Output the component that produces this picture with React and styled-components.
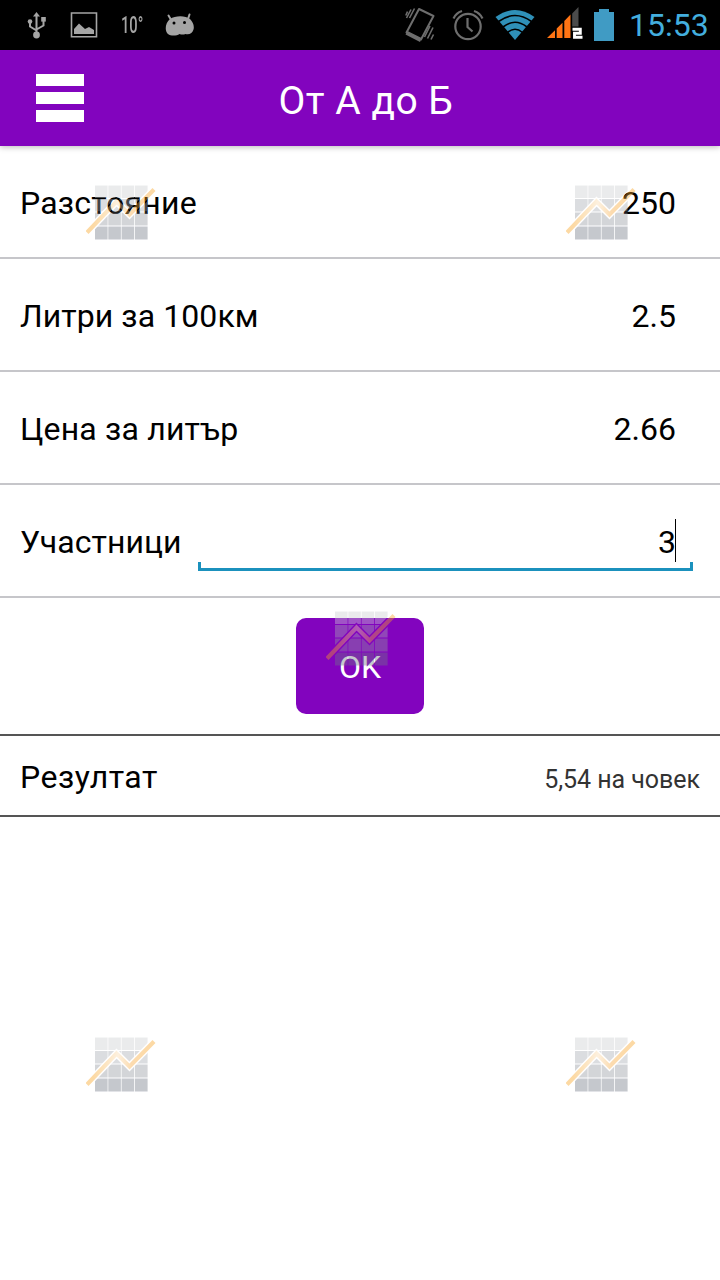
import React, { useState } from 'react';
import styled, { createGlobalStyle } from 'styled-components';

const palette = {
  purple: '#8204be',
  holo: '#43aede',
  holoDark: '#1b91bd',
  line: '#c6c6ca',
  dark: '#555555',
  statusLight: '#a5a5a5',
  statusDim: '#6e6e6e',
};

const GlobalStyle = createGlobalStyle`
  body {
    margin: 0;
    background: #fff;
    font-family: Roboto, 'Noto Sans', sans-serif;
  }
  * {
    box-sizing: border-box;
  }
`;

const Screen = styled.div`
  position: relative;
  width: 720px;
  height: 1280px;
  overflow: hidden;
  background: #fff;
`;

const StatusBar = styled.div`
  display: flex;
  justify-content: space-between;
  height: 50px;
  padding: 0 12px 0 24px;
  background: #000;
`;

const StatusGroup = styled.div`
  display: flex;
  align-items: center;
`;

const StatusIcon = styled.svg`
  display: block;
  flex: none;
`;

const Spacer = styled.span`
  flex: none;
  width: ${({ $w }) => $w}px;
`;

const Temperature = styled.span`
  width: 20px;
  margin: 0 24px 0 23px;
  color: ${palette.statusLight};
  font-size: 24px;
  font-weight: 500;
  line-height: 52px;
  white-space: nowrap;
  transform: scaleX(0.61);
  transform-origin: left center;
`;

const Clock = styled.span`
  width: 79px;
  margin-left: 15px;
  color: ${palette.holo};
  font-size: 32px;
  line-height: 53px;
  white-space: nowrap;
`;

const Header = styled.header`
  position: relative;
  display: grid;
  grid-template-columns: 48px 1fr 72px;
  align-items: center;
  height: 96px;
  padding-left: 36px;
  background: ${palette.purple};
  box-shadow: 0 1px 6px rgba(0, 0, 0, 0.28);
`;

const MenuButton = styled.button`
  display: flex;
  flex-direction: column;
  gap: 6px;
  width: 48px;
  padding: 0;
  border: 0;
  background: none;
`;

const MenuBar = styled.span`
  height: 12px;
  background: #fff;
`;

const Title = styled.h1`
  margin: 6px 0 0;
  color: #fff;
  font-size: 39px;
  font-weight: 400;
  line-height: 46px;
  letter-spacing: 0.5px;
  text-align: center;
`;

const Row = styled.label`
  display: flex;
  height: 113px;
  padding: 0 27px 0 20px;
  border-bottom: 2px solid ${palette.line};
`;

const Label = styled.span`
  color: #000;
  font-size: 32px;
  line-height: ${({ $height }) => $height || 115}px;
  letter-spacing: ${({ $spacing }) => $spacing}px;
  white-space: nowrap;
`;

const Field = styled.div`
  flex: 1;
  position: relative;
  display: flex;
  justify-content: flex-end;
  align-items: center;
  height: 86px;
  margin-left: 16px;
  padding: 27px 17px 0 0;
`;

const Brackets = styled.span`
  position: absolute;
  left: 0;
  right: 0;
  bottom: 0;
  height: 9px;
  border: 3px solid ${palette.holoDark};
  border-top: 0;
`;

const Caret = styled.span`
  position: absolute;
  right: 17px;
  top: 34px;
  width: 1px;
  height: 43px;
  background: #000;
`;

const Value = styled.input`
  width: 100%;
  padding: 0;
  border: 0;
  outline: 0;
  background: none;
  color: #000;
  font: 32px Roboto, 'Noto Sans', sans-serif;
  text-align: right;
`;

const Actions = styled.div`
  display: flex;
  justify-content: center;
  padding: 20px 0;
`;

const OkButton = styled.button`
  width: 128px;
  height: 96px;
  padding: 2px 0 0;
  border: 0;
  border-radius: 10px;
  background: ${palette.purple};
  color: #fff;
  font: 32px Roboto, 'Noto Sans', sans-serif;
`;

const Result = styled.div`
  display: flex;
  justify-content: space-between;
  height: 83px;
  padding: 0 20px;
  border: solid ${palette.dark};
  border-width: 2px 0;
`;

const ResultText = styled.span`
  color: #333;
  font-size: 25px;
  line-height: 87px;
  letter-spacing: -0.05px;
  white-space: nowrap;
`;

const Mark = styled.svg`
  position: absolute;
  left: ${({ $x }) => $x}px;
  top: ${({ $y }) => $y}px;
  pointer-events: none;
`;

const UsbIcon = () => (
  <StatusIcon width="26" height="30" viewBox="0 0 26 30" fill="none" stroke={palette.statusLight} strokeWidth="2">
    <path d="M12.5 5v20M6 12v4.500l6.500 4M19.500 10v5.500l-7 4" />
    <path d="M12.500 2l3.500 4.500h-7z" fill={palette.statusLight} stroke="none" />
    <circle cx="12.500" cy="25" r="3.400" fill={palette.statusLight} stroke="none" />
    <circle cx="6" cy="11.500" r="2.300" fill={palette.statusLight} stroke="none" />
    <path d="M17.200 7h4.600v4.600h-4.600z" fill={palette.statusLight} stroke="none" />
  </StatusIcon>
);

const PictureIcon = () => (
  <StatusIcon width="28" height="26" viewBox="0 0 28 26">
    <path d="M1.500 1h25v23.700h-25z" fill="none" stroke={palette.statusLight} strokeWidth="1.600" />
    <path d="M4 22v-5l5-5.500 6 5.500 4-2 5 3v4z" fill={palette.statusLight} />
  </StatusIcon>
);

const DroidIcon = () => (
  <StatusIcon width="30" height="24" viewBox="0 0 30 24">
    <path d="M3.500 2.500l3 5M24.500 1.500l-2 6" stroke={palette.statusLight} strokeWidth="2" strokeLinecap="round" />
    <path
      d="M5 6C10 2.500 20 2 25 6c3 3 4.500 7 3.500 10.500-1 3.500-4 5.500-8 4.500-2 .8-4 .8-6 0-3 2-9 2-11.500 0C-.5 18 0 10 5 6z"
      fill={palette.statusLight}
    />
    <circle cx="9" cy="10" r="1.500" fill="#000" />
    <circle cx="19.500" cy="9.500" r="1.500" fill="#000" />
  </StatusIcon>
);

const VibrateIcon = () => (
  <StatusIcon width="30" height="36" viewBox="0 0 30 36" fill="none" stroke={palette.statusDim}>
    <path d="M14 2l14.500 7L16 32.500 1.500 25.500z" strokeWidth="2" strokeLinejoin="round" />
    <path d="M2.500 24l14 7-1.500 4L.5 27.500z" fill={palette.statusDim} stroke="none" />
    <path
      d="M9.500 1.500L4.500 11M6 2.500L1.500 11M2.500 4.500L.8 8.500M28 20.500l-5.500 11M28.500 27.500l-2.500 5M25 19l-5.500 11"
      strokeWidth="1.600"
    />
  </StatusIcon>
);

const AlarmIcon = () => (
  <StatusIcon width="32" height="32" viewBox="0 0 32 32" fill="none" stroke={palette.statusDim} strokeWidth="2.200">
    <circle cx="16" cy="17.500" r="12.700" />
    <path d="M15.500 9v9l5 4.500M1.500 9.500Q4 4 10 2M30.500 9.500Q28 4 22 2" />
  </StatusIcon>
);

const WifiIcon = () => (
  <StatusIcon width="40" height="32" viewBox="0 0 40 32">
    <path d="M.5 8Q20-6 39.500 8L20 31z" fill="#2f90b8" />
    <path
      d="M3.500 12.500Q20 .5 36.500 12.500M8 18Q20 8.500 32 18M12.500 23.500Q20 17 27.500 23.500"
      fill="none"
      stroke="#000"
      strokeWidth="1.600"
    />
  </StatusIcon>
);

const SignalIcon = () => (
  <StatusIcon width="36" height="36" viewBox="0 0 36 36">
    <path d="M0 31l8-7.700V31zM9.700 31v-9.500l5.800-5.800V31zM17.300 31V14l6.200-6.500V31z" fill="#ff7414" />
    <path d="M25.200 31V6.500L31.500 0v31z" fill="#4b4b4b" />
    <path d="M24.500 19.500h11.500v13h-11.500z" fill="#000" />
    <path d="M25.500 22.200h7.800v4h-5.800v4h8" fill="none" stroke="#fff" strokeWidth="2.900" />
  </StatusIcon>
);

const BatteryIcon = () => (
  <StatusIcon width="20" height="32" viewBox="0 0 20 32">
    <path d="M0 3h5V0h10v3h5v29H0z" fill="#409bc4" />
  </StatusIcon>
);

const cellRows = [
  { y: 0.5, h: 12.5, color: '#cdcfd2' },
  { y: 14, h: 12.5, color: '#a8acb3' },
  { y: 27.5, h: 13, color: '#93979f' },
  { y: 41.5, h: 13, color: '#707785' },
];

const cellColumns = [9, 22.3, 35.6, 49];

const ChartMark = ({ x, y }) => {
  const id = `${x}-${y}`;

  return (
    <Mark $x={x} $y={y} width="70" height="56" viewBox="0 0 70 56">
      <defs>
        <linearGradient id={`line-${id}`} gradientUnits="userSpaceOnUse" x1="0" y1="0" x2="70" y2="0">
          <stop offset="0.1" stopColor="#f9a11b" />
          <stop offset="0.46" stopColor="#fbdcb0" />
          <stop offset="0.65" stopColor="#f9a83a" />
          <stop offset="1" stopColor="#f9a11b" />
        </linearGradient>
        {/* keeps a thin gap between the cells and the trend line */}
        <mask id={`gap-${id}`}>
          <rect width="70" height="56" fill="#fff" />
          <path d="M1 47.500L30.500 16.500l13 13L68 4.500" fill="none" stroke="#000" strokeWidth="7" />
        </mask>
      </defs>
      <g opacity="0.4">
        <g mask={`url(#gap-${id})`}>
          {cellRows.map((row) =>
            cellColumns.map((cx) => (
              <rect key={cx} x={cx} y={row.y} width="12.600" height={row.h} fill={row.color} />
            )),
          )}
        </g>
        <path
          d="M1 47.500L30.500 16.500l13 13L68 4.500"
          fill="none"
          stroke={`url(#line-${id})`}
          strokeWidth="4.200"
        />
      </g>
    </Mark>
  );
};

const fields = [
  { name: 'distance', label: 'Разстояние', value: '250', spacing: 0.2 },
  { name: 'litres', label: 'Литри за 100км', value: '2.5', spacing: 0.08 },
  { name: 'price', label: 'Цена за литър', value: '2.66', spacing: 0.18 },
  { name: 'people', label: 'Участници', value: '3', spacing: 0.06 },
];

const marks = [
  [86, 185],
  [566, 185],
  [326, 611],
  [86, 1037],
  [566, 1037],
];

const App = () => {
  const [values, setValues] = useState(
    Object.fromEntries(fields.map((field) => [field.name, field.value])),
  );
  const [active, setActive] = useState('people');

  const onChange = (e) => {
    setValues({ ...values, [e.target.name]: e.target.value });
  };

  return (
    <Screen>
      <GlobalStyle />
      <StatusBar>
        <StatusGroup>
          <UsbIcon />
          <Spacer $w={20} />
          <PictureIcon />
          <Temperature>10°</Temperature>
          <DroidIcon />
        </StatusGroup>
        <StatusGroup>
          <VibrateIcon />
          <Spacer $w={17} />
          <AlarmIcon />
          <Spacer $w={11} />
          <WifiIcon />
          <Spacer $w={12} />
          <SignalIcon />
          <Spacer $w={11} />
          <BatteryIcon />
          <Clock>15:53</Clock>
        </StatusGroup>
      </StatusBar>
      <Header>
        <MenuButton aria-label="Меню">
          <MenuBar />
          <MenuBar />
          <MenuBar />
        </MenuButton>
        <Title>От А до Б</Title>
      </Header>
      {fields.map(({ name, label, spacing }) => (
        <Row key={name}>
          <Label $spacing={spacing}>{label}</Label>
          <Field>
            <Value
              name={name}
              value={values[name]}
              onChange={onChange}
              onFocus={() => setActive(name)}
            />
            {active === name && <Brackets />}
            {active === name && <Caret />}
          </Field>
        </Row>
      ))}
      <Actions>
        <OkButton>OK</OkButton>
      </Actions>
      <Result>
        <Label $height={83} $spacing={0.5}>
          Резултат
        </Label>
        <ResultText>5,54 на човек</ResultText>
      </Result>
      {marks.map(([x, y]) => (
        <ChartMark key={`${x}-${y}`} x={x} y={y} />
      ))}
    </Screen>
  );
};

export default App;
